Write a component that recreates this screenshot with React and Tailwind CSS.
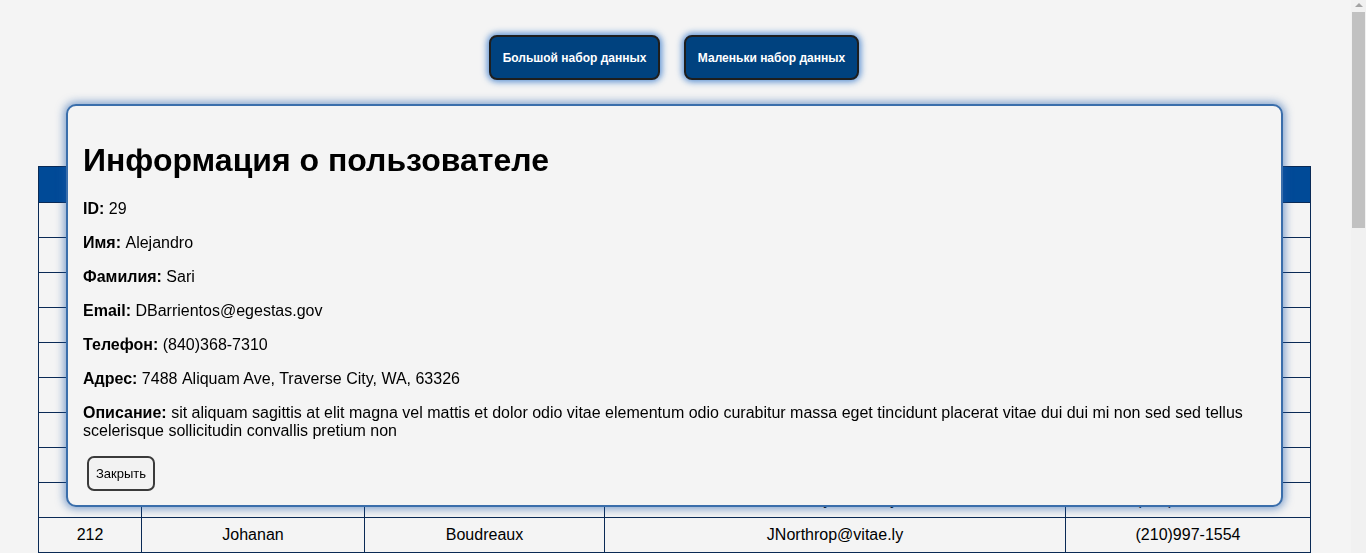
import React from "react";

const rows = [
  [101, "Lizabeth", "Holcomb", "LRoberson@amet.net", "(412)516-8842"],
  [118, "Maryann", "Sparks", "MMorgan@tortor.io", "(803)220-4917"],
  [125, "Trevor", "Wheeler", "TAlston@sapien.com", "(617)394-2286"],
  [137, "Deborah", "Kimball", "DSchultz@egestas.org", "(512)788-3305"],
  [146, "Lorenzo", "Haines", "LFrench@porta.net", "(308)671-0954"],
  [159, "Shanice", "Pearson", "SKnight@lectus.gov", "(925)143-6620"],
  [173, "Gregory", "Dalton", "GMercer@augue.io", "(716)402-5581"],
  [188, "Valeria", "Bridges", "VCarney@nulla.com", "(281)935-7713"],
  [196, "Marcus", "Tillman", "MCoffey@dolor.ly", "(443)260-1198"],
  [212, "Johanan", "Boudreaux", "JNorthrop@vitae.ly", "(210)997-1554"],
  [225, "Kelsey", "Ramirez", "KDunbar@metus.org", "(619)571-2043"],
  [231, "Antonio", "Whitlock", "AHarmon@massa.net", "(305)884-6627"],
  [247, "Rebecca", "Fletcher", "RLowell@ipsum.com", "(702)318-9450"],
  [258, "Darnell", "Pruitt", "DVance@risus.gov", "(504)627-3371"],
  [263, "Heather", "Langley", "HBooker@magna.io", "(919)452-8806"],
  [279, "Sergio", "Calloway", "SHobbs@tellus.net", "(206)739-1124"],
  [284, "Tamara", "Ellison", "TRankin@odio.org", "(314)905-6672"],
  [296, "Wesley", "Garner", "WMoody@elit.com", "(480)261-4439"],
  [305, "Bianca", "Holloway", "BSutton@purus.ly", "(615)843-2097"],
  [317, "Curtis", "Medina", "CBarlow@vel.net", "(832)570-3318"],
  [322, "Natalie", "Stafford", "NGoodwin@diam.io", "(407)196-5583"],
  [338, "Raymond", "Pittman", "RHurley@nunc.com", "(757)328-9041"],
  [341, "Yolanda", "Becker", "YWaller@quam.org", "(913)684-2270"],
  [356, "Dominic", "Sheppard", "DFinley@amet.gov", "(559)417-8836"],
  [362, "Caroline", "Mayfield", "CGentry@lorem.net", "(240)753-6615"],
  [379, "Terrence", "Oakley", "TBlanton@justo.io", "(385)902-4478"],
  [384, "Monica", "Stevens", "MWeeks@sed.com", "(608)215-7392"],
  [391, "Jerome", "Castillo", "JBaird@mauris.ly", "(727)469-1153"],
  [403, "Felicia", "Hampton", "FDoyle@urna.org", "(318)530-8864"],
  [416, "Russell", "Vaughn", "RParks@felis.net", "(850)377-2209"],
  [428, "Leticia", "Burgess", "LNoble@eros.com", "(402)681-5547"],
  [435, "Howard", "Ingram", "HTate@ante.io", "(971)264-3380"],
];

function Field({ label, value }) {
  return (
    <p className="m-0 mb-[16px] text-[16px] leading-[18px] text-black">
      <b className="font-bold">{label}:</b> {value}
    </p>
  );
}

export default function App() {
  return (
    <div className="bg-[#f4f4f4] pb-[28px] font-['Liberation_Sans',Arial,sans-serif] text-black">
      <div className="w-[1351px]">
        <div className="flex justify-center gap-[24px] pr-[3px] pt-[35px]">
          <button className="h-[45px] w-[171px] rounded-[8px] border-2 border-[#1e1e1e] bg-[#00427f] text-[12px] font-bold text-white shadow-[0_0_6px_2px_rgba(45,115,200,0.75)]">
            Большой набор данных
          </button>
          <button className="h-[45px] w-[175px] rounded-[8px] border-2 border-[#1e1e1e] bg-[#00427f] text-[12px] font-bold text-white shadow-[0_0_6px_2px_rgba(45,115,200,0.75)]">
            Маленьки набор данных
          </button>
        </div>

        <table className="ml-[38px] mt-[86px] w-[1273px] border-collapse border border-[#0a2a55] text-[16px]">
          <thead>
            <tr className="h-[36px] bg-[#004a97] text-white">
              <th className="w-[103px] border border-[#0a2a55] font-bold">ID</th>
              <th className="w-[223px] border border-[#0a2a55] font-bold">Имя</th>
              <th className="w-[240px] border border-[#0a2a55] font-bold">Фамилия</th>
              <th className="w-[461px] border border-[#0a2a55] font-bold">Email</th>
              <th className="border border-[#0a2a55] font-bold">Телефон</th>
            </tr>
          </thead>
          <tbody>
            {rows.map((r) => (
              <tr key={r[0]} className="h-[35px]">
                {r.map((c, i) => (
                  <td key={i} className="border border-[#0a2a55] text-center leading-[18.4px]">
                    {c}
                  </td>
                ))}
              </tr>
            ))}
          </tbody>
        </table>
      </div>

      <div className="fixed left-[66px] top-[104px] w-[1217px] rounded-[10px] border-2 border-[#3a6eab] bg-[#f4f4f4] px-[15px] pb-[14px] pt-[36px] shadow-[0_0_9px_2px_rgba(30,90,170,0.55)]">
        <h2 className="m-0 mb-[21px] text-[32px] font-bold leading-[37px]">Информация о пользователе</h2>
        <Field label="ID" value="29" />
        <Field label="Имя" value="Alejandro" />
        <Field label="Фамилия" value="Sari" />
        <Field label="Email" value="DBarrientos@egestas.gov" />
        <Field label="Телефон" value="(840)368-7310" />
        <Field label="Адрес" value="7488 Aliquam Ave, Traverse City, WA, 63326" />
        <Field
          label="Описание"
          value="sit aliquam sagittis at elit magna vel mattis et dolor odio vitae elementum odio curabitur massa eget tincidunt placerat vitae dui dui mi non sed sed tellus scelerisque sollicitudin convallis pretium non"
        />
        <button className="ml-[4px] mt-[1px] block h-[35px] w-[68px] rounded-[7px] border-2 border-[#3a3a3a] bg-[#f2f2f2] text-[13px] text-black">
          Закрыть
        </button>
      </div>

      <div className="fixed right-0 top-0 flex h-[553px] w-[15px] flex-col items-center bg-[#f1f1f1]">
        <div className="mt-[3px] h-0 w-0 border-x-[4px] border-b-[4px] border-x-transparent border-b-[#a3a3a3]" />
        <div className="mt-[5px] h-[216px] w-[13px] bg-[#c1c1c1]" />
      </div>
    </div>
  );
}
